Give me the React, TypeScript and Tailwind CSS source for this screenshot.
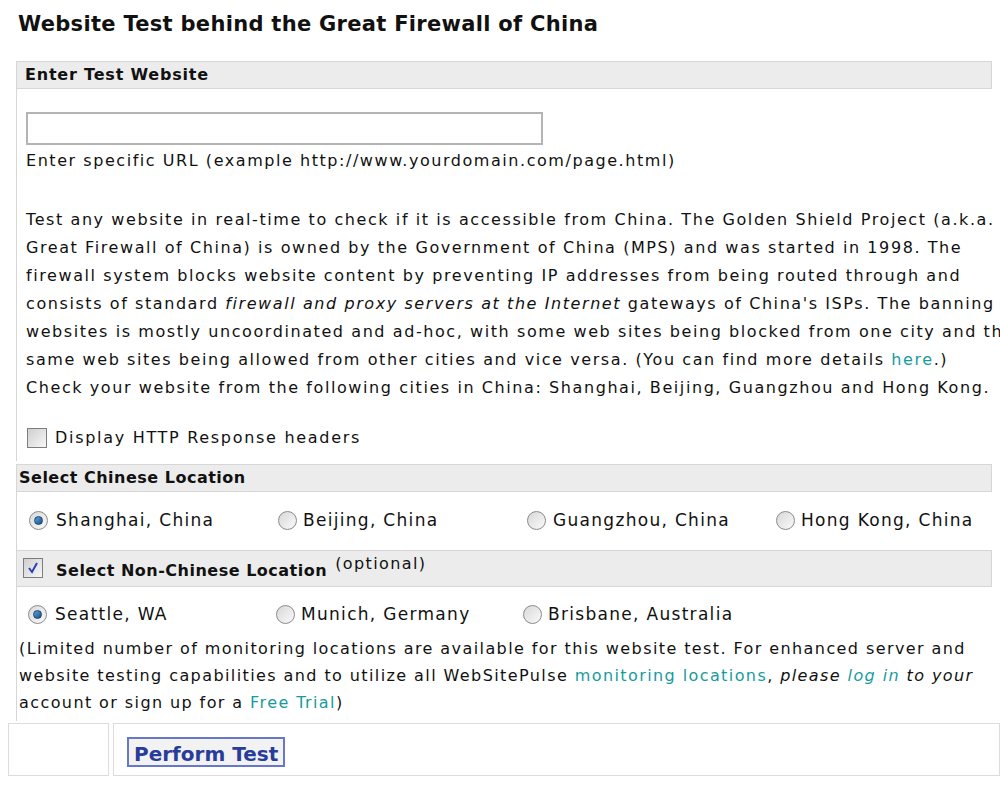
import React from 'react';

const Radio = ({ checked }: { checked?: boolean }) => (
  <span className="inline-flex h-[19px] w-[19px] shrink-0 items-center justify-center rounded-full border border-[#8a8a8a] bg-gradient-to-br from-[#d8d8d8] to-[#fafafa]">
    {checked && <span className="h-[9px] w-[9px] rounded-full bg-gradient-to-br from-[#5aa8e0] to-[#1a4f86] border border-[#1c3f66]"></span>}
  </span>
);

const Check = ({ checked }: { checked?: boolean }) => (
  <span className="inline-flex h-[20px] w-[20px] shrink-0 items-center justify-center border border-[#7d7d7d] bg-gradient-to-br from-[#cfcfcf] to-[#f7f7f7]">
    {checked && (
      <svg width="14" height="14" viewBox="0 0 14 14">
        <path d="M3 7 L6 11 L11 2" fill="none" stroke="#2a40b8" strokeWidth="2" />
      </svg>
    )}
  </span>
);

const Link = ({ children, italic }: { children: React.ReactNode; italic?: boolean }) => (
  <a className={`text-[#169c9c] ${italic ? 'italic' : ''}`}>{children}</a>
);

export default function App() {
  return (
    <div className="h-[807px] w-[1000px] overflow-hidden bg-white font-['DejaVu_Sans',sans-serif] text-[16px] text-[#111]">
      <h1 className="pl-[18px] pt-[9px] text-[21px] font-bold tracking-[0.3px]">Website Test behind the Great Firewall of China</h1>

      <div className="ml-[16px] mt-[20px] w-[976px]">
        {/* Enter Test Website */}
        <div className="flex h-[28px] items-center border border-[#d6d6d6] bg-[#ececec] pl-[8px] text-[16px] font-bold tracking-[0.8px]">Enter Test Website</div>
        <div className="border-l border-[#d6d6d6] pl-[9px] pt-[23px] pb-[11px] tracking-[1.55px]">
          <input className="block h-[33px] w-[517px] border-2 border-[#b4b4b4] bg-white outline-none" />
          <div className="mt-[4px]">Enter specific URL (example http://www.yourdomain.com/page.html)</div>

          <div className="mt-[33px] whitespace-nowrap leading-[28px] tracking-[1.58px]">
            <div>Test any website in real-time to check if it is accessible from China. The Golden Shield Project (a.k.a.</div>
            <div>Great Firewall of China) is owned by the Government of China (MPS) and was started in 1998. The</div>
            <div>firewall system blocks website content by preventing IP addresses from being routed through and</div>
            <div>consists of standard <i>firewall and proxy servers at the Internet</i> gateways of China's ISPs. The banning of</div>
            <div>websites is mostly uncoordinated and ad-hoc, with some web sites being blocked from one city and the</div>
            <div>same web sites being allowed from other cities and vice versa. (You can find more details <Link>here</Link>.)</div>
            <div>Check your website from the following cities in China: Shanghai, Beijing, Guangzhou and Hong Kong.</div>
          </div>

          <label className="mt-[24px] flex items-center gap-[8px] pl-[1px] tracking-[1.7px]">
            <Check />
            <span>Display HTTP Response headers</span>
          </label>
        </div>

        {/* Select Chinese Location */}
        <div className="mt-[3px] flex h-[28px] items-center border border-[#d6d6d6] bg-[#ececec] pl-[2px] text-[16px] font-bold tracking-[0.5px]">Select Chinese Location</div>
        <div className="flex h-[58px] items-center border-l border-[#d6d6d6] pl-[12px] text-[17px] tracking-[1.3px]">
          <label className="flex w-[249px] items-center gap-[8px]"><Radio checked /><span>Shanghai, China</span></label>
          <label className="flex w-[249px] items-center gap-[6px]"><Radio /><span>Beijing, China</span></label>
          <label className="flex w-[249px] items-center gap-[7px]"><Radio /><span>Guangzhou, China</span></label>
          <label className="flex items-center gap-[6px]"><Radio /><span>Hong Kong, China</span></label>
        </div>

        {/* Select Non-Chinese Location */}
        <div className="flex h-[37px] items-center gap-[13px] border border-[#d6d6d6] bg-[#ececec] pl-[6px]">
          <Check checked />
          <span className="mt-[6px] font-bold tracking-[0.5px]">Select Non-Chinese Location</span>
          <span className="-ml-[5px] -mt-[8px] tracking-[1.4px]">(optional)</span>
        </div>
        <div className="border-l border-[#d6d6d6] pb-[5px]">
          <div className="flex h-[48px] items-center pl-[11px] pt-[8px] text-[17px] tracking-[1.3px]">
            <label className="flex w-[248px] items-center gap-[8px]"><Radio checked /><span>Seattle, WA</span></label>
            <label className="flex w-[247px] items-center gap-[6px]"><Radio /><span>Munich, Germany</span></label>
            <label className="flex items-center gap-[6px]"><Radio /><span>Brisbane, Australia</span></label>
          </div>
          <div className="whitespace-nowrap pl-[2px] leading-[27px] tracking-[1.41px]">
            <div>(Limited number of monitoring locations are available for this website test. For enhanced server and</div>
            <div>website testing capabilities and to utilize all WebSitePulse <Link>monitoring locations</Link>, <i>please</i> <Link italic>log in</Link> <i>to your</i></div>
            <div>account or sign up for a <Link>Free Trial</Link>)</div>
          </div>
        </div>
      </div>

      {/* Bottom row */}
      <div className="mt-[2px] flex h-[53px] pl-[8px]">
        <div className="w-[101px] border border-[#dcdcdc]"></div>
        <div className="ml-[4px] flex flex-1 items-center border border-[#dcdcdc] pl-[13px] pt-[6px]">
          <button className="h-[30px] border-2 border-[#6878c8] bg-[#f2f2f2] px-[5px] text-[20px] font-bold text-[#283c9c]">Perform Test</button>
        </div>
      </div>
    </div>
  );
}
